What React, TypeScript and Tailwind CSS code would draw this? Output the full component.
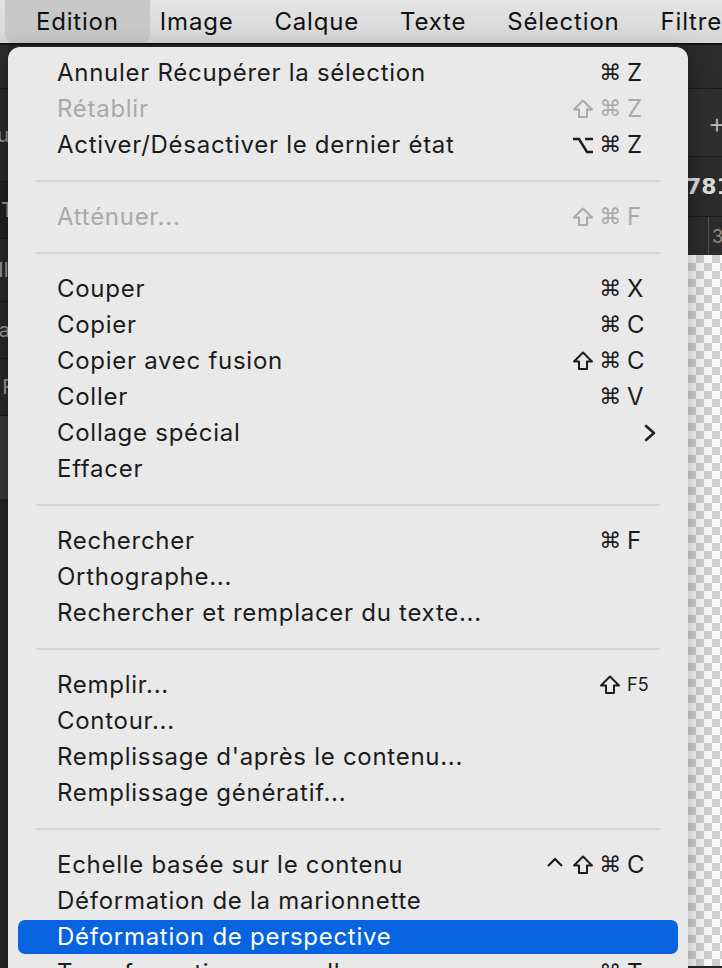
import React from 'react';

type Row =
  | { kind: 'sep' }
  | {
      kind: 'item';
      label: string;
      mods?: string[];
      keyLabel?: string;
      small?: boolean;
      disabled?: boolean;
      submenu?: boolean;
      active?: boolean;
    };

const rows: Row[] = [
  { kind: 'item', label: 'Annuler Récupérer la sélection', mods: ['cmd'], keyLabel: 'Z' },
  { kind: 'item', label: 'Rétablir', mods: ['shift', 'cmd'], keyLabel: 'Z', disabled: true },
  { kind: 'item', label: 'Activer/Désactiver le dernier état', mods: ['opt', 'cmd'], keyLabel: 'Z' },
  { kind: 'sep' },
  { kind: 'item', label: 'Atténuer...', mods: ['shift', 'cmd'], keyLabel: 'F', disabled: true },
  { kind: 'sep' },
  { kind: 'item', label: 'Couper', mods: ['cmd'], keyLabel: 'X' },
  { kind: 'item', label: 'Copier', mods: ['cmd'], keyLabel: 'C' },
  { kind: 'item', label: 'Copier avec fusion', mods: ['shift', 'cmd'], keyLabel: 'C' },
  { kind: 'item', label: 'Coller', mods: ['cmd'], keyLabel: 'V' },
  { kind: 'item', label: 'Collage spécial', submenu: true },
  { kind: 'item', label: 'Effacer' },
  { kind: 'sep' },
  { kind: 'item', label: 'Rechercher', mods: ['cmd'], keyLabel: 'F' },
  { kind: 'item', label: 'Orthographe...' },
  { kind: 'item', label: 'Rechercher et remplacer du texte...' },
  { kind: 'sep' },
  { kind: 'item', label: 'Remplir...', mods: ['shift'], keyLabel: 'F5', small: true },
  { kind: 'item', label: 'Contour...' },
  { kind: 'item', label: "Remplissage d'après le contenu..." },
  { kind: 'item', label: 'Remplissage génératif...' },
  { kind: 'sep' },
  { kind: 'item', label: 'Echelle basée sur le contenu', mods: ['ctrl', 'shift', 'cmd'], keyLabel: 'C' },
  { kind: 'item', label: 'Déformation de la marionnette' },
  { kind: 'item', label: 'Déformation de perspective', active: true },
  { kind: 'item', label: 'Transformation manuelle', mods: ['cmd'], keyLabel: 'T' },
];

const menus = ['Image', 'Calque', 'Texte', 'Sélection', 'Filtre'];

function Chevron() {
  return (
    <svg width="14" height="20" viewBox="0 0 14 20" className="text-[#222]">
      <polyline points="3,3 11,10 3,17" fill="none" stroke="currentColor" strokeWidth="2.6" strokeLinecap="round" strokeLinejoin="round" />
    </svg>
  );
}

// modifier key glyphs
function Mod({ name }: { name: string }) {
  if (name === 'shift') {
    return (
      <svg width="22" height="22" viewBox="0 0 22 22" className="mx-auto">
        <path
          d="M11 2.5 L20 11.5 H15 V19 H7 V11.5 H2 Z"
          fill="none"
          stroke="currentColor"
          strokeWidth="2"
          strokeLinejoin="round"
        />
      </svg>
    );
  }
  if (name === 'opt') {
    return (
      <svg width="24" height="20" viewBox="0 0 24 20" className="mx-auto">
        <path d="M2 4 H8 L16 17 H22 M14 4 H22" fill="none" stroke="currentColor" strokeWidth="2.4" />
      </svg>
    );
  }
  if (name === 'ctrl') {
    return (
      <svg width="20" height="20" viewBox="0 0 20 20" className="mx-auto">
        <polyline points="3,11 10,4 17,11" fill="none" stroke="currentColor" strokeWidth="2.2" strokeLinejoin="miter" />
      </svg>
    );
  }
  return (
    <span className="block text-center text-[22px] leading-none font-['DejaVu_Sans',sans-serif]">⌘</span>
  );
}

function MenuRow({ row }: { row: Row }) {
  if (row.kind === 'sep') {
    return (
      <div className="h-[36px] flex items-center px-[28px]">
        <div className="h-[2px] w-full bg-[#d5d5d5]" />
      </div>
    );
  }
  const tone = row.active ? 'text-white' : row.disabled ? 'text-[#a9a9a9]' : 'text-[#1c1c1c]';
  return (
    <div className={`h-[36px] flex items-center ${row.active ? 'px-[10px]' : ''}`}>
      <div
        className={`h-[34px] w-full flex items-center ${tone} ${
          row.active ? 'bg-[#0763df] rounded-[7px] pl-[39px]' : 'pl-[49px]'
        }`}
      >
        <span className="flex-1 text-[24px] leading-none tracking-[0.72px] whitespace-nowrap">{row.label}</span>
        {row.keyLabel && (
          <div className="flex items-center pr-[24px]">
            {row.mods?.map((m, i) => (
              <div key={i} className="w-[27.5px] flex items-center justify-center">
                <Mod name={m} />
              </div>
            ))}
            <span
              className={`w-[40px] pl-[3px] leading-none ${row.small ? 'text-[18px]' : 'text-[24px]'}`}
            >
              {row.keyLabel}
            </span>
          </div>
        )}
        {row.submenu && (
          <div className="pr-[31px] flex items-center">
            <Chevron />
          </div>
        )}
      </div>
    </div>
  );
}

export default function App() {
  return (
    <div className="relative w-[722px] h-[968px] overflow-hidden bg-[#262626] font-['Inter',sans-serif] antialiased">
      {/* menu bar */}
      <div className="h-[45px] flex items-stretch bg-gradient-to-b from-[#e4e4e4] to-[#d6d6d6] border-b-[2px] border-[#141414]">
        <div className="ml-[5px] w-[145px] h-[43px] rounded-b-[8px] bg-[#c8c8c8] flex items-center justify-center text-[24px] tracking-[0.8px] text-[#111]">
          Edition
        </div>
        <div className="ml-[10px] flex items-center gap-[41px] text-[24px] tracking-[0.8px] text-[#111] whitespace-nowrap">
          {menus.map((m) => (
            <span key={m}>{m}</span>
          ))}
        </div>
      </div>

      {/* app behind the menu */}
      <div className="flex h-[921px]">
        <div className="w-[8px] flex flex-col text-[20px] text-[#9a9a9a] overflow-hidden">
          <div className="h-[44px] bg-[#2c2c2c] border-b border-[#1c1c1c]" />
          <div className="h-[93px] bg-[#2a2a2a] border-b border-[#1c1c1c] flex items-center justify-end">
            <span className="-mr-[1px]">u</span>
          </div>
          <div className="h-[57px] bg-[#222] border-b border-[#1c1c1c] flex items-center justify-end">
            <span className="-mr-[6px]">T</span>
          </div>
          <div className="h-[63px] bg-[#2a2a2a] border-b border-[#1c1c1c] flex items-center justify-end">
            <span className="-mr-[1px]">II</span>
          </div>
          <div className="h-[57px] bg-[#2a2a2a] border-b border-[#1c1c1c] flex items-center justify-end">
            <span className="-mr-[2px]">a</span>
          </div>
          <div className="h-[57px] bg-[#2a2a2a] border-b border-[#1c1c1c] flex items-center justify-end">
            <span className="-mr-[6px]">F</span>
          </div>
          <div className="h-[83px] bg-[#3a3a3a]" />
          <div className="flex-1 bg-[#252525]" />
        </div>
        <div className="flex-1" />
        <div className="w-[34px] flex flex-col">
          <div className="h-[44px] bg-[#2b2b2b] border-b border-[#1d1d1d]" />
          <div className="h-[68px] bg-[#2e2e2e] border-b border-[#1d1d1d] flex items-center justify-end text-[28px] text-[#bdbdbd] font-light">
            <span className="-mr-[4px]">+</span>
          </div>
          <div className="h-[60px] bg-[#2b2b2b] border-b border-[#1d1d1d] flex items-center text-[22px] font-bold text-[#dcdcdc] font-['DejaVu_Sans',sans-serif] whitespace-nowrap overflow-hidden">
            <span className="-ml-[2px]">781</span>
          </div>
          <div className="h-[38px] bg-[#2c2c2c] flex items-end text-[18px] text-[#8d8d8d] overflow-hidden">
            <div className="ml-[20px] h-full border-l border-[#555] pl-[3px] flex items-center">3</div>
          </div>
          <div className="flex-1 bg-white bg-[conic-gradient(#d0d0d0_25%,#fafafa_0_50%,#d0d0d0_0_75%,#fafafa_0)] bg-[length:16px_16px]" />
        </div>
      </div>

      {/* dropdown */}
      <div className="absolute left-[8px] top-[47px] w-[680px] h-[960px] rounded-t-[12px] bg-[#e9e9e9] shadow-[0_6px_24px_rgba(0,0,0,0.35)] pt-[8px]">
        {rows.map((r, i) => (
          <MenuRow key={i} row={r} />
        ))}
      </div>
    </div>
  );
}
